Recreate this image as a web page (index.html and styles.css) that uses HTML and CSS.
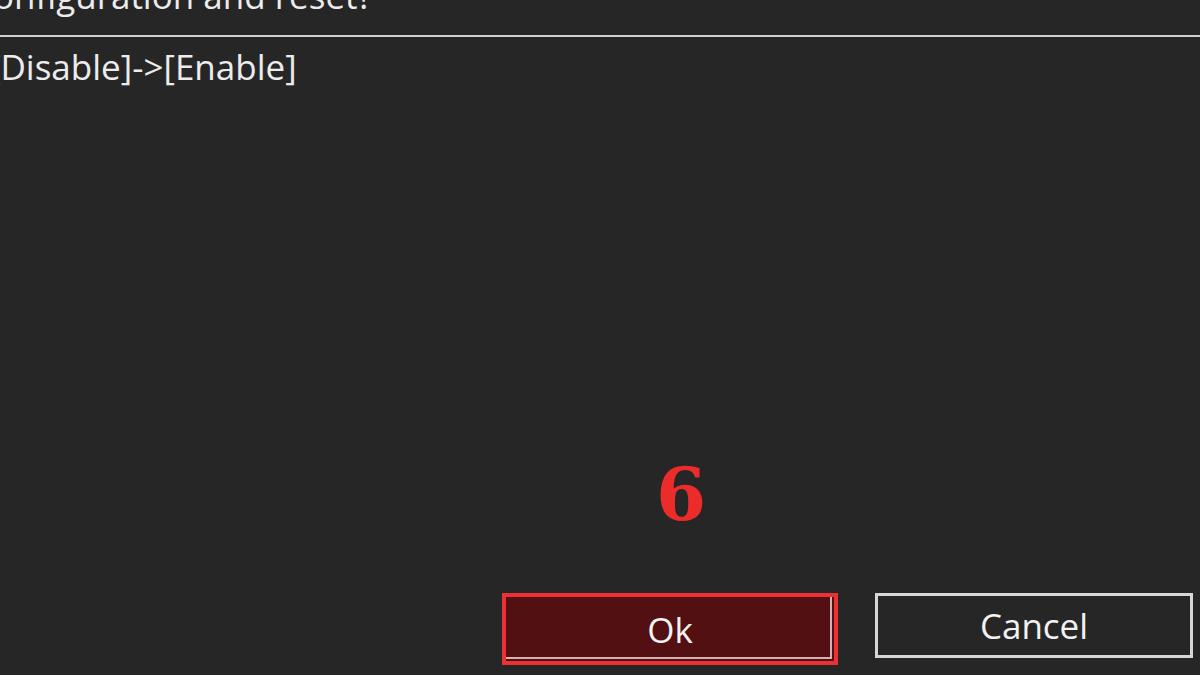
FILE: index.html
```html
<!DOCTYPE html>
<html lang="en">
	<head>
		<meta charset="UTF-8" />
		<meta name="viewport" content="width=device-width, initial-scale=1.0" />
		<title>Configuration and reset</title>
		<link rel="stylesheet" href="styles.css">
	</head>
	<body>
		<div class="dialog">
			<h2 class="title">Configuration and reset?</h2>
			<div class="change">[Disable]-&gt;[Enable]</div>

			<div class="actions">
				<button class="btn btn-ok" type="button">Ok</button>
				<button class="btn btn-cancel" type="button">Cancel</button>
			</div>

			<span class="step">6</span>
		</div>
	</body>
</html>
```

FILE: styles.css
```css
body {
	margin: 0;
	background-color: #262626;
	font-family: "Open Sans", "Noto Sans", sans-serif;
	color: #ececec;
	overflow: hidden;
}

.dialog {
	position: relative;
	display: flex;
	flex-direction: column;
	height: 675px;
	box-sizing: border-box;
}

.dialog .title {
	margin: -28px 0 0 -11px;
	padding: 0 0 15px;
	font-weight: 400;
	font-size: 35px;
	line-height: 48px;
	text-indent: -18px;
	border-bottom: 2px solid #cfcfcf;
	width: 1211px;
}

.dialog .change {
	margin-left: -11px;
	font-size: 35px;
	line-height: 60px;
}

.actions {
	display: flex;
	justify-content: flex-end;
	align-items: flex-start;
	gap: 37px;
	margin-top: auto;
	margin-bottom: 10px;
	padding-right: 7px;
}

.btn {
	font-family: inherit;
	font-size: 35px;
	color: #f2f2f2;
	cursor: pointer;
	padding: 0;
}

.btn-ok {
	width: 336px;
	height: 72px;
	border: 4px solid #ec3134;
	background-color: #531012;
	box-shadow: inset -2px -2px 0 #531012, inset -4px -4px 0 #d4b2b2;
}

.btn-cancel {
	width: 318px;
	height: 65px;
	border: 3px solid #d6d6d6;
	background-color: #262626;
}

.step {
	position: absolute;
	left: 656px;
	top: 452px;
	font-family: "DejaVu Serif", serif;
	font-weight: 700;
	font-size: 72px;
	color: #ec2b2b;
}
```
